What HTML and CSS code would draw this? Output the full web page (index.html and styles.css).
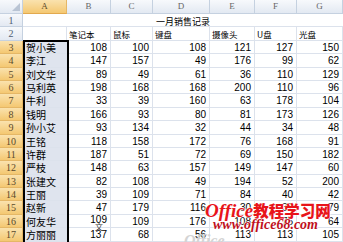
FILE: index.html
```html
<!DOCTYPE html>
<html><head>
<meta charset="utf-8">
<title>一月销售记录</title>
<link rel="stylesheet" href="styles.css">
</head><body>

<div class="sheet">
<div class="corner"></div><div class="ch on">A</div><div class="ch">B</div><div class="ch">C</div><div class="ch">D</div><div class="ch">E</div><div class="ch">F</div><div class="ch">G</div>

<div class="rh">1</div><div class="c title">一月销售记录</div>
<div class="rh">2</div><div class="c"></div><div class="c t">笔记本</div><div class="c t">鼠标</div><div class="c t">键盘</div><div class="c t">摄像头</div><div class="c t">U盘</div><div class="c t">光盘</div>

<div class="rh on">3</div><div class="c nm">贺小美</div><div class="c n">108</div><div class="c n">100</div><div class="c n">108</div><div class="c n">121</div><div class="c n">127</div><div class="c n">150</div>
<div class="rh on">4</div><div class="c nm">李江</div><div class="c n">147</div><div class="c n">157</div><div class="c n">49</div><div class="c n">176</div><div class="c n">99</div><div class="c n">62</div>
<div class="rh on">5</div><div class="c nm">刘文华</div><div class="c n">89</div><div class="c n">49</div><div class="c n">61</div><div class="c n">36</div><div class="c n">110</div><div class="c n">129</div>
<div class="rh on">6</div><div class="c nm">马利英</div><div class="c n">198</div><div class="c n">168</div><div class="c n">168</div><div class="c n">200</div><div class="c n">110</div><div class="c n">96</div>
<div class="rh on">7</div><div class="c nm">牛利</div><div class="c n">33</div><div class="c n">39</div><div class="c n">160</div><div class="c n">63</div><div class="c n">178</div><div class="c n">104</div>
<div class="rh on">8</div><div class="c nm">钱明</div><div class="c n">166</div><div class="c n">93</div><div class="c n">80</div><div class="c n">81</div><div class="c n">173</div><div class="c n">126</div>
<div class="rh on">9</div><div class="c nm">孙小艾</div><div class="c n">93</div><div class="c n">134</div><div class="c n">32</div><div class="c n">44</div><div class="c n">34</div><div class="c n">48</div>
<div class="rh on">10</div><div class="c nm">王铭</div><div class="c n">118</div><div class="c n">158</div><div class="c n">172</div><div class="c n">76</div><div class="c n">168</div><div class="c n">91</div>
<div class="rh on">11</div><div class="c nm">许群</div><div class="c n">187</div><div class="c n">51</div><div class="c n">72</div><div class="c n">69</div><div class="c n">150</div><div class="c n">182</div>
<div class="rh on">12</div><div class="c nm">严枝</div><div class="c n">148</div><div class="c n">63</div><div class="c n">157</div><div class="c n">149</div><div class="c n">147</div><div class="c n">60</div>
<div class="rh on">13</div><div class="c nm">张建文</div><div class="c n">82</div><div class="c n">108</div><div class="c n">49</div><div class="c n">194</div><div class="c n">52</div><div class="c n">200</div>
<div class="rh on">14</div><div class="c nm">王丽</div><div class="c n">39</div><div class="c n">109</div><div class="c n">71</div><div class="c n">84</div><div class="c n">40</div><div class="c n">42</div>
<div class="rh on">15</div><div class="c nm">赵新</div><div class="c n">47</div><div class="c n">179</div><div class="c n">116</div><div class="c n">30</div><div class="c n">37</div><div class="c n">79</div>
<div class="rh on">16</div><div class="c nm">何友华</div><div class="c n up">109</div><div class="c n">109</div><div class="c n">176</div><div class="c n">108</div><div class="c n">75</div><div class="c n">64</div>
<div class="rh on">17</div><div class="c nm">方丽丽</div><div class="c n">137</div><div class="c n">68</div><div class="c n">56</div><div class="c n">113</div><div class="c n">113</div><div class="c n">105</div>

<div class="sel"></div>
<div class="stray">文</div>
<div class="ghost">Office</div>
<div class="mark">
<div><span class="o">Office</span><span class="cn">教程学习网</span></div>
<div class="url">www.office68.com</div>
</div>
</div>

</body></html>
```

FILE: styles.css
```css
body{margin:0;background:#fff;overflow:hidden;}

/* worksheet grid: row header + columns A..G */
.sheet{position:relative;display:grid;grid-template-columns:23px 44px 44px 42px 57px 45px 42px 46px;grid-template-rows:14px repeat(17,13.4px);width:343px;height:242px;overflow:hidden;font-family:"Liberation Sans",sans-serif;font-size:10px;color:#000;}

.corner,.ch,.rh{box-sizing:border-box;border-right:1px solid #c5d1e0;border-bottom:1px solid #c5d1e0;background:linear-gradient(#f7f9fc,#e3e9f2);}
.corner{position:relative;}
.corner:after{content:'';position:absolute;right:2px;bottom:2px;border-left:8px solid transparent;border-bottom:8px solid #b9c4d4;}
.ch{font-family:"Liberation Serif",serif;font-size:9px;color:#666;text-align:center;line-height:13px;}
.rh{font-family:"Liberation Serif",serif;font-size:10px;color:#4e5d72;text-align:center;line-height:13px;}
.ch.on,.rh.on{background:linear-gradient(#fae2ae,#f4c872);border-color:#e5b766;color:#5a4a2c;}
.ch.on{border-bottom-color:#e2a94e;}

.c{box-sizing:border-box;border-right:1px solid #dce2ec;border-bottom:1px solid #dce2ec;line-height:13px;white-space:nowrap;overflow:visible;}
.title{grid-column:span 7;border-right:0;text-align:center;font-family:"Noto Sans CJK SC",sans-serif;font-size:9px;padding-top:1px;}
.t{font-family:"Noto Sans CJK SC",sans-serif;font-size:8.5px;padding:1px 0 0 2px;}
.nm{font-family:"Noto Sans CJK SC",sans-serif;font-size:10px;padding-left:3px;background:#dfe4ee;}
.n{text-align:right;padding-right:3px;font-size:10px;}
.n.up{line-height:9px;}

/* selected range A3:A17 */
.sel{position:absolute;left:23px;top:39.5px;width:46px;height:210px;box-sizing:border-box;border:2px solid #000;}

.stray{position:absolute;left:95px;top:222px;font-family:"Noto Sans CJK SC",sans-serif;font-size:8px;line-height:9px;color:#333;}
.ghost{position:absolute;left:184px;top:232px;font-family:"Liberation Serif",serif;font-style:italic;font-weight:bold;font-size:16px;color:#d4d4d4;}

/* site watermark */
.mark{position:absolute;left:205px;top:200px;color:#e8141a;font-weight:bold;font-style:italic;text-shadow:0 0 2px #fff,0 0 2px #fff,0 0 1px #fff;}
.mark .o{font-family:"Liberation Serif",serif;font-size:19px;line-height:20px;}
.mark .cn{font-family:"Noto Sans CJK SC",sans-serif;font-size:15.5px;font-style:normal;font-weight:900;line-height:20px;}
.url{margin:-3px 0 0 8px;font-family:"Liberation Serif",serif;font-size:14px;line-height:14px;color:#c0101c;}
```
